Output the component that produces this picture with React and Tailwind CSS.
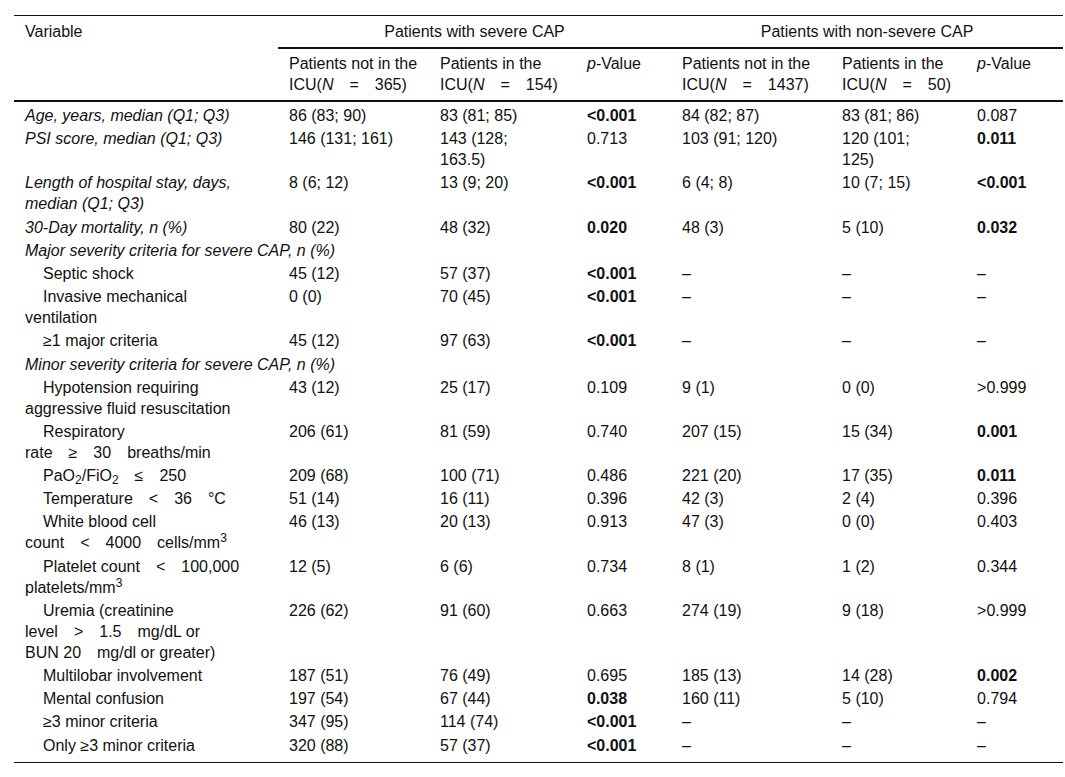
import React from 'react';

const S = '\u2003';

const B = ({ children }) => <b className="font-bold">{children}</b>;

// label, italic heading, indented, then six values
const ROWS = [
  { label: 'Age, years, median (Q1; Q3)', italic: true, v: ['86 (83; 90)', '83 (81; 85)', <B>&lt;0.001</B>, '84 (82; 87)', '83 (81; 86)', '0.087'] },
  { label: 'PSI score, median (Q1; Q3)', italic: true, v: ['146 (131; 161)', <>143 (128;<br />163.5)</>, '0.713', '103 (91; 120)', <>120 (101;<br />125)</>, <B>0.011</B>] },
  { label: <>Length of hospital stay, days,<br />median (Q1; Q3)</>, italic: true, v: ['8 (6; 12)', '13 (9; 20)', <B>&lt;0.001</B>, '6 (4; 8)', '10 (7; 15)', <B>&lt;0.001</B>] },
  { label: '30-Day mortality, n (%)', italic: true, v: ['80 (22)', '48 (32)', <B>0.020</B>, '48 (3)', '5 (10)', <B>0.032</B>] },
  { label: 'Major severity criteria for severe CAP, n (%)', section: true },
  { label: 'Septic shock', indent: true, v: ['45 (12)', '57 (37)', <B>&lt;0.001</B>, '–', '–', '–'] },
  { label: <>Invasive mechanical<br />ventilation</>, indent: true, v: ['0 (0)', '70 (45)', <B>&lt;0.001</B>, '–', '–', '–'] },
  { label: '≥1 major criteria', indent: true, v: ['45 (12)', '97 (63)', <B>&lt;0.001</B>, '–', '–', '–'] },
  { label: 'Minor severity criteria for severe CAP, n (%)', section: true },
  { label: <>Hypotension requiring<br />aggressive fluid resuscitation</>, indent: true, v: ['43 (12)', '25 (17)', '0.109', '9 (1)', '0 (0)', '>0.999'] },
  { label: <>Respiratory<br />rate{S}≥{S}30{S}breaths/min</>, indent: true, v: ['206 (61)', '81 (59)', '0.740', '207 (15)', '15 (34)', <B>0.001</B>] },
  { label: <>PaO<sub>2</sub>/FiO<sub>2</sub>{S}≤{S}250</>, indent: true, v: ['209 (68)', '100 (71)', '0.486', '221 (20)', '17 (35)', <B>0.011</B>] },
  { label: <>Temperature{S}&lt;{S}36{S}°C</>, indent: true, v: ['51 (14)', '16 (11)', '0.396', '42 (3)', '2 (4)', '0.396'] },
  { label: <>White blood cell<br />count{S}&lt;{S}4000{S}cells/mm<sup>3</sup></>, indent: true, v: ['46 (13)', '20 (13)', '0.913', '47 (3)', '0 (0)', '0.403'] },
  { label: <>Platelet count{S}&lt;{S}100,000<br />platelets/mm<sup>3</sup></>, indent: true, v: ['12 (5)', '6 (6)', '0.734', '8 (1)', '1 (2)', '0.344'] },
  { label: <>Uremia (creatinine<br />level{S}&gt;{S}1.5{S}mg/dL or<br />BUN 20{S}mg/dl or greater)</>, indent: true, v: ['226 (62)', '91 (60)', '0.663', '274 (19)', '9 (18)', '>0.999'] },
  { label: 'Multilobar involvement', indent: true, v: ['187 (51)', '76 (49)', '0.695', '185 (13)', '14 (28)', <B>0.002</B>] },
  { label: 'Mental confusion', indent: true, v: ['197 (54)', '67 (44)', <B>0.038</B>, '160 (11)', '5 (10)', '0.794'] },
  { label: '≥3 minor criteria', indent: true, v: ['347 (95)', '114 (74)', <B>&lt;0.001</B>, '–', '–', '–'] },
  { label: 'Only ≥3 minor criteria', indent: true, v: ['320 (88)', '57 (37)', <B>&lt;0.001</B>, '–', '–', '–'] },
];

const icu = (n) => (
  <>
    ICU(<i>N</i>{S}={S}{n})
  </>
);

export default function App() {
  const last = ROWS.length - 1;
  const pad = (i) =>
    i === 0
      ? 'pt-[3px] pb-[1.1px]'
      : i === last
        ? 'pt-[1.1px] pb-[6px] border-b border-[#111]'
        : 'py-[1.1px]';
  const th = 'px-[11px] pt-[4px] pb-[5px] align-top text-left font-normal';

  return (
    <div className="min-h-[777px] bg-white pl-[14px] pt-[15px] text-[#111] text-[16px] leading-[21px] [&_sup]:leading-none [&_sub]:leading-none" style={{ fontFamily: '"Liberation Sans", Arial, sans-serif' }}>
      <table className="w-[1049px] table-fixed border-collapse">
        <colgroup>
          <col className="w-[264px]" />
          <col className="w-[151px]" />
          <col className="w-[147px]" />
          <col className="w-[95px]" />
          <col className="w-[160px]" />
          <col className="w-[135px]" />
          <col className="w-[97px]" />
        </colgroup>
        <thead>
          <tr>
            <th rowSpan={2} className="px-[11px] pt-[5px] align-top text-left font-normal border-t border-b-2 border-[#111]">Variable</th>
            <th colSpan={3} className="px-[11px] py-[5px] text-center font-normal border-t border-b-2 border-[#111]">Patients with severe CAP</th>
            <th colSpan={3} className="px-[11px] py-[5px] text-center font-normal border-t border-b-2 border-[#111]">Patients with non-severe CAP</th>
          </tr>
          <tr className="border-b-2 border-[#111]">
            <th className={th}>Patients not in the<br />{icu(365)}</th>
            <th className={th}>Patients in the<br />{icu(154)}</th>
            <th className={th}><i>p</i>-Value</th>
            <th className={th}>Patients not in the<br />{icu(1437)}</th>
            <th className={th}>Patients in the<br />{icu(50)}</th>
            <th className={th}><i>p</i>-Value</th>
          </tr>
        </thead>
        <tbody>
          {ROWS.map((r, i) => {
            const cell = `px-[11px] align-top text-left ${pad(i)}`;
            return (
              <tr key={i}>
                {r.section ? (
                  <td colSpan={7} className={`${cell} italic`}>{r.label}</td>
                ) : (
                  <>
                    <td className={`${cell} ${r.italic ? 'italic' : ''} ${r.indent ? 'indent-[18px]' : ''}`}>{r.label}</td>
                    {r.v.map((v, j) => (
                      <td key={j} className={cell}>{v}</td>
                    ))}
                  </>
                )}
              </tr>
            );
          })}
        </tbody>
      </table>
    </div>
  );
}
